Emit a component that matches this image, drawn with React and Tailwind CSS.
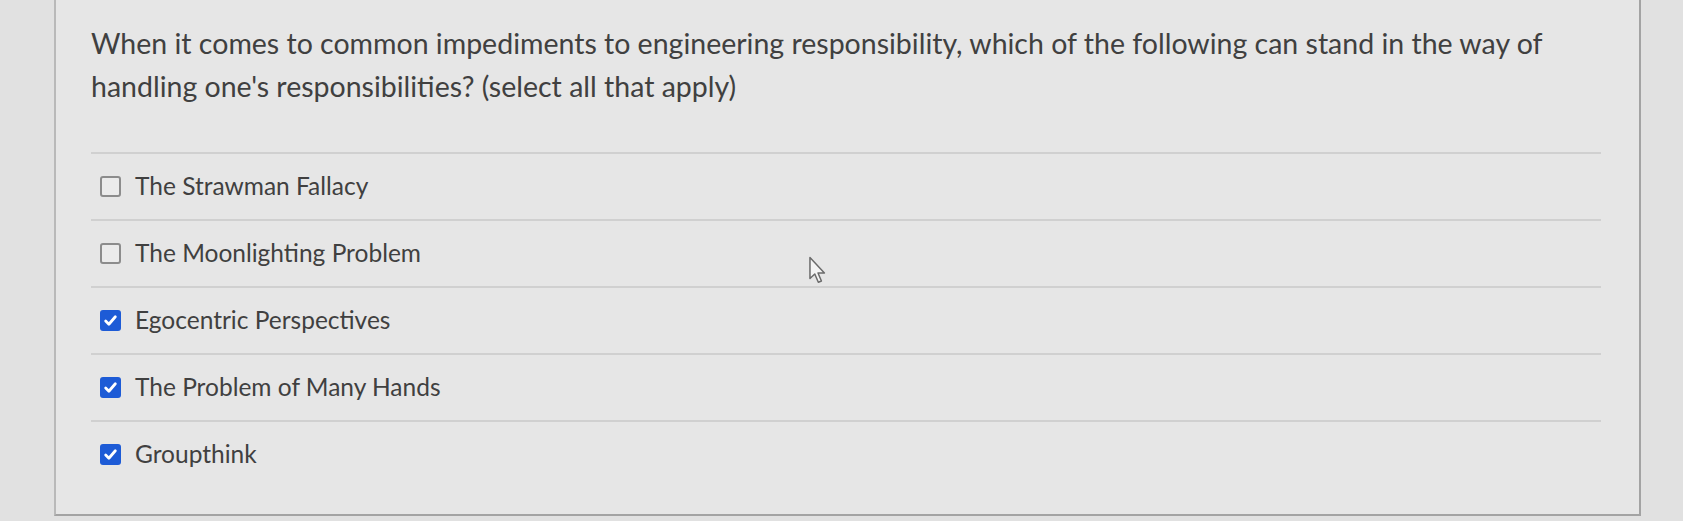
const options = [
  { label: "The Strawman Fallacy", checked: false },
  { label: "The Moonlighting Problem", checked: false },
  { label: "Egocentric Perspectives", checked: true },
  { label: "The Problem of Many Hands", checked: true },
  { label: "Groupthink", checked: true },
];

function Box({ checked }) {
  if (checked) {
    return (
      <span className="flex h-[21px] w-[21px] shrink-0 items-center justify-center rounded-[3px] bg-[#1d5bd6]">
        <svg width="15" height="15" viewBox="0 0 14 14" fill="none">
          <path d="M2.5 7.5 L5.5 10.5 L11.5 3.5" stroke="white" strokeWidth="2.6" strokeLinecap="round" strokeLinejoin="round" />
        </svg>
      </span>
    );
  }
  return <span className="h-[21px] w-[21px] shrink-0 rounded-[3px] border-2 border-[#8c8c8c] bg-[#ebebeb]" />;
}

export default function App() {
  return (
    <div className="relative h-[521px] overflow-hidden bg-[#e1e1e1] pl-[54px] pr-[42px] font-['Lato','Liberation_Sans',sans-serif] text-[#404040]">
      <div className="h-[516px] border-x-2 border-b-2 border-l-[#b9b9b9] border-r-[#a3a3a3] border-b-[#a3a3a3] bg-[#e6e6e6] pl-[35px] pr-[38px] pt-[22px]">
        <p className="text-[28.5px] leading-[43px]">
          When it comes to common impediments to engineering responsibility, which of the following can stand in the way of
          <br />
          handling one's responsibilities? (select all that apply)
        </p>
        <ul className="mt-[44px]">
          {options.map((o) => (
            <li key={o.label} className="flex h-[67px] items-center gap-[14px] border-t-2 border-[#d0d0d0] pl-[9px] text-[24.5px]">
              <Box checked={o.checked} />
              <span>{o.label}</span>
            </li>
          ))}
        </ul>
      </div>
      <svg className="absolute left-[808px] top-[256px]" width="20" height="30" viewBox="0 0 18 28" fill="none">
        <path d="M1.5 1.5 L1.5 21 L6 16.8 L9.3 24.5 L12.2 23.3 L9 15.8 L15 15.8 Z" fill="#f4f4f4" stroke="#6b6b6b" strokeWidth="1.4" strokeLinejoin="round" />
      </svg>
    </div>
  );
}
